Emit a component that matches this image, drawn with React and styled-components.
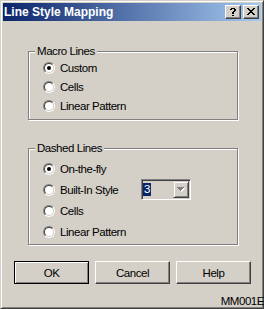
import React from 'react';
import styled, { createGlobalStyle } from 'styled-components';

const FONT = `"Liberation Sans", Arial, sans-serif`;

const Global = createGlobalStyle`
  html, body { margin: 0; padding: 0; background: #D4D0C8; }
  body { width: 264px; height: 309px; overflow: hidden; }
`;

const Window = styled.div`
  box-sizing: border-box;
  width: 264px;
  height: 309px;
  border: 1px solid;
  border-color: #D4D0C8 #404040 #404040 #D4D0C8;
  box-shadow: inset 1px 1px #fff, inset -1px -1px #808080;
  padding: 2px;
  background: #D4D0C8;
  display: flex;
  flex-direction: column;
  font-family: ${FONT};
  font-size: 11.5px;
  letter-spacing: -0.45px;
  color: #000;
`;

const TitleBar = styled.div`
  height: 18px;
  flex: none;
  display: flex;
  align-items: center;
  padding: 0 2px 0 1px;
  background: linear-gradient(to right, #0A246A, #A6CAF0);
`;

const Title = styled.div`
  flex: 1;
  color: #fff;
  font-family: "Liberation Sans", Arial, sans-serif;
  font-weight: bold;
  font-size: 12px;
  letter-spacing: 0;
  line-height: 14px;
  white-space: nowrap;
`;

const CaptionButtons = styled.div`
  display: flex;
  gap: 2px;
`;

const CapButton = styled.div`
  box-sizing: border-box;
  width: 16px;
  height: 14px;
  border: 1px solid;
  border-color: #fff #404040 #404040 #fff;
  box-shadow: inset -1px -1px #808080;
  background: #D4D0C8;
  display: flex;
  align-items: center;
  justify-content: center;
  padding: 0 1px 1px 0;
`;

const Body = styled.div`
  display: flex;
  flex-direction: column;
  flex: 1;
`;

const Group = styled.div`
  position: relative;
  box-sizing: border-box;
  width: 210px;
  height: ${(p) => p.$h}px;
  margin-left: 25px;
  margin-top: ${(p) => p.$mt}px;
  border: 1px solid #808080;
  box-shadow: inset 1px 1px #fff, 1px 1px #fff;
  padding: ${(p) => p.$pt}px 0 0 14px;
  display: flex;
  flex-direction: column;
`;

const Legend = styled.div`
  position: absolute;
  top: -8px;
  left: 6px;
  padding: 0 2px;
  line-height: 14px;
  background: #D4D0C8;
  white-space: nowrap;
`;

const Row = styled.div`
  display: flex;
  align-items: center;
  height: ${(p) => p.$h}px;
  flex: none;
`;

const RadioOuter = styled.span`
  box-sizing: border-box;
  width: 12px;
  height: 12px;
  flex: none;
  border-radius: 50%;
  border: 1px solid;
  border-color: #808080 #fff #fff #808080;
  display: flex;
`;

const RadioInner = styled.span`
  box-sizing: border-box;
  width: 10px;
  height: 10px;
  border-radius: 50%;
  border: 1px solid;
  border-color: #404040 #D4D0C8 #D4D0C8 #404040;
  background: #fff;
  display: flex;
  align-items: center;
  justify-content: center;
`;

const Dot = styled.span`
  width: 4px;
  height: 4px;
  border-radius: 50%;
  background: #000;
`;

const Label = styled.span`
  margin-left: 5px;
  line-height: 14px;
  white-space: nowrap;
  ${(p) => (p.$w ? `width: ${p.$w}px;` : '')}
`;

const Combo = styled.div`
  box-sizing: border-box;
  width: 50px;
  height: 21px;
  border: 1px solid;
  border-color: #808080 #fff #fff #808080;
  box-shadow: inset 1px 1px #404040, inset -1px -1px #D4D0C8;
  padding: 1px;
  background: #D4D0C8;
  display: flex;
`;

const ComboField = styled.div`
  flex: 1;
  display: flex;
  align-items: center;
`;

const Selected = styled.span`
  background: #0A246A;
  color: #fff;
  line-height: 13px;
  padding: 0 1px;
`;

const ComboButton = styled.div`
  box-sizing: border-box;
  width: 16px;
  height: 17px;
  border: 1px solid;
  border-color: #D4D0C8 #404040 #404040 #D4D0C8;
  box-shadow: inset 1px 1px #fff, inset -1px -1px #808080;
  display: flex;
  align-items: center;
  justify-content: center;
`;

const ButtonRow = styled.div`
  display: flex;
  gap: 6px;
  margin-left: 11px;
  margin-top: 16px;
`;

const Button = styled.div`
  box-sizing: border-box;
  width: 75px;
  height: 23px;
  border: 1px solid;
  border-color: ${(p) => (p.$default ? '#000' : '#fff #404040 #404040 #fff')};
  box-shadow: ${(p) =>
    p.$default
      ? 'inset 1px 1px #fff, inset -1px -1px #808080'
      : 'inset -1px -1px #808080'};
  background: #D4D0C8;
  display: flex;
  align-items: center;
  justify-content: center;
  line-height: 14px;
`;

const Footer = styled.div`
  position: relative;
  display: flex;
  justify-content: flex-end;
  margin-top: 10px;
  margin-right: -3px;
  line-height: 14px;
  white-space: nowrap;
`;

const Pix = ({ rows, color, offset }) => {
  const w = rows[0].length;
  const h = rows.length;
  const rects = [];
  rows.forEach((r, y) =>
    r.split('').forEach((c, x) => {
      if (c === 'X' && offset)
        rects.push(<rect key={`s${x}-${y}`} x={x + 1} y={y + 1} width="1" height="1" fill="#fff" />);
    })
  );
  rows.forEach((r, y) =>
    r.split('').forEach((c, x) => {
      if (c === 'X') rects.push(<rect key={`${x}-${y}`} x={x} y={y} width="1" height="1" fill={color} />);
    })
  );
  return (
    <svg width={w + (offset ? 1 : 0)} height={h + (offset ? 1 : 0)} shapeRendering="crispEdges">
      {rects}
    </svg>
  );
};

const HELP = ['.XXXX.', 'XX..XX', '....XX', '...XX.', '..XX..', '..XX..', '......', '..XX..'];
const CLOSE = ['XX....XX', '.XX..XX.', '..XXXX..', '...XX...', '..XXXX..', '.XX..XX.', 'XX....XX'];
const ARROW = ['XXXXXXX', '.XXXXX.', '..XXX..', '...X...'];

const Radio = ({ checked, children, w }) => (
  <>
    <RadioOuter>
      <RadioInner>{checked && <Dot />}</RadioInner>
    </RadioOuter>
    <Label $w={w}>{children}</Label>
  </>
);

export default function App() {
  return (
    <>
      <Global />
      <Window>
        <TitleBar>
          <Title>Line Style Mapping</Title>
          <CaptionButtons>
            <CapButton>
              <Pix rows={HELP} color="#000" />
            </CapButton>
            <CapButton>
              <Pix rows={CLOSE} color="#000" />
            </CapButton>
          </CaptionButtons>
        </TitleBar>
        <Body>
          <Group $h={69} $mt={30} $pt={6}>
            <Legend>Macro Lines</Legend>
            <Row $h={19}>
              <Radio checked>Custom</Radio>
            </Row>
            <Row $h={19}>
              <Radio>Cells</Radio>
            </Row>
            <Row $h={19}>
              <Radio>Linear Pattern</Radio>
            </Row>
          </Group>
          <Group $h={97} $mt={28} $pt={9}>
            <Legend>Dashed Lines</Legend>
            <Row $h={21}>
              <Radio checked>On-the-fly</Radio>
            </Row>
            <Row $h={21}>
              <Radio w={81}>Built-In Style</Radio>
              <Combo>
                <ComboField>
                  <Selected>3</Selected>
                </ComboField>
                <ComboButton>
                  <Pix rows={ARROW} color="#808080" offset />
                </ComboButton>
              </Combo>
            </Row>
            <Row $h={21}>
              <Radio>Cells</Radio>
            </Row>
            <Row $h={22}>
              <Radio>Linear Pattern</Radio>
            </Row>
          </Group>
          <ButtonRow>
            <Button $default>OK</Button>
            <Button>Cancel</Button>
            <Button>Help</Button>
          </ButtonRow>
          <Footer>MM001E</Footer>
        </Body>
      </Window>
    </>
  );
}
